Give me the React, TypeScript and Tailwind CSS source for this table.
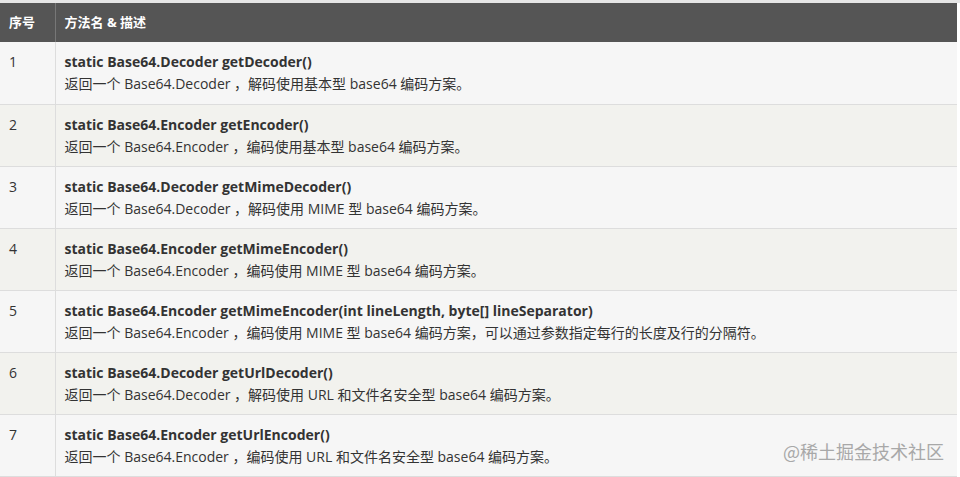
import React from "react";

const rows = [
  ["static Base64.Decoder getDecoder()", "返回一个 Base64.Decoder ，解码使用基本型 base64 编码方案。"],
  ["static Base64.Encoder getEncoder()", "返回一个 Base64.Encoder ，编码使用基本型 base64 编码方案。"],
  ["static Base64.Decoder getMimeDecoder()", "返回一个 Base64.Decoder ，解码使用 MIME 型 base64 编码方案。"],
  ["static Base64.Encoder getMimeEncoder()", "返回一个 Base64.Encoder ，编码使用 MIME 型 base64 编码方案。"],
  ["static Base64.Encoder getMimeEncoder(int lineLength, byte[] lineSeparator)", "返回一个 Base64.Encoder ，编码使用 MIME 型 base64 编码方案，可以通过参数指定每行的长度及行的分隔符。"],
  ["static Base64.Decoder getUrlDecoder()", "返回一个 Base64.Decoder ，解码使用 URL 和文件名安全型 base64 编码方案。"],
  ["static Base64.Encoder getUrlEncoder()", "返回一个 Base64.Encoder ，编码使用 URL 和文件名安全型 base64 编码方案。"],
];

export default function App() {
  return (
    <div
      className="relative w-[960px] h-[477px] overflow-hidden bg-white pt-[3px] text-[#333]"
      style={{ fontFamily: '"Open Sans", "Noto Sans CJK SC", sans-serif' }}
    >
      <div className="absolute left-0 top-0 w-full h-[3px] bg-[#e6e6e6]" />
      <table className="w-[957px] border-collapse text-[14px]">
        <thead>
          <tr className="bg-[#555] text-white h-[39px]">
            <th className="w-[55px] text-left font-bold text-[13px] pl-[9px] border-r border-[#777]">序号</th>
            <th className="text-left font-bold text-[13px] pl-[9px]">方法名 &amp; 描述</th>
          </tr>
        </thead>
        <tbody>
          {rows.map((r, i) => (
            <tr key={i} className={i % 2 === 0 ? "bg-[#f6f6f6] h-[62px]" : "bg-[#f2f2ee] h-[62px]"}>
              <td className="align-top pl-[9px] pt-[9px] border-r border-b border-[#ddd] leading-[22px]">{i + 1}</td>
              <td className="align-top pl-[9px] pt-[9px] border-b border-[#ddd] leading-[22px]">
                <div className="font-bold">{r[0]}</div>
                <div className="text-[14px]">{r[1]}</div>
              </td>
            </tr>
          ))}
        </tbody>
      </table>
      <div className="absolute left-[783px] top-[438px] text-[18px] text-[#a8a8a8]" style={{ fontFamily: '"Noto Sans CJK SC", sans-serif' }}>
        @稀土掘金技术社区
      </div>
    </div>
  );
}
